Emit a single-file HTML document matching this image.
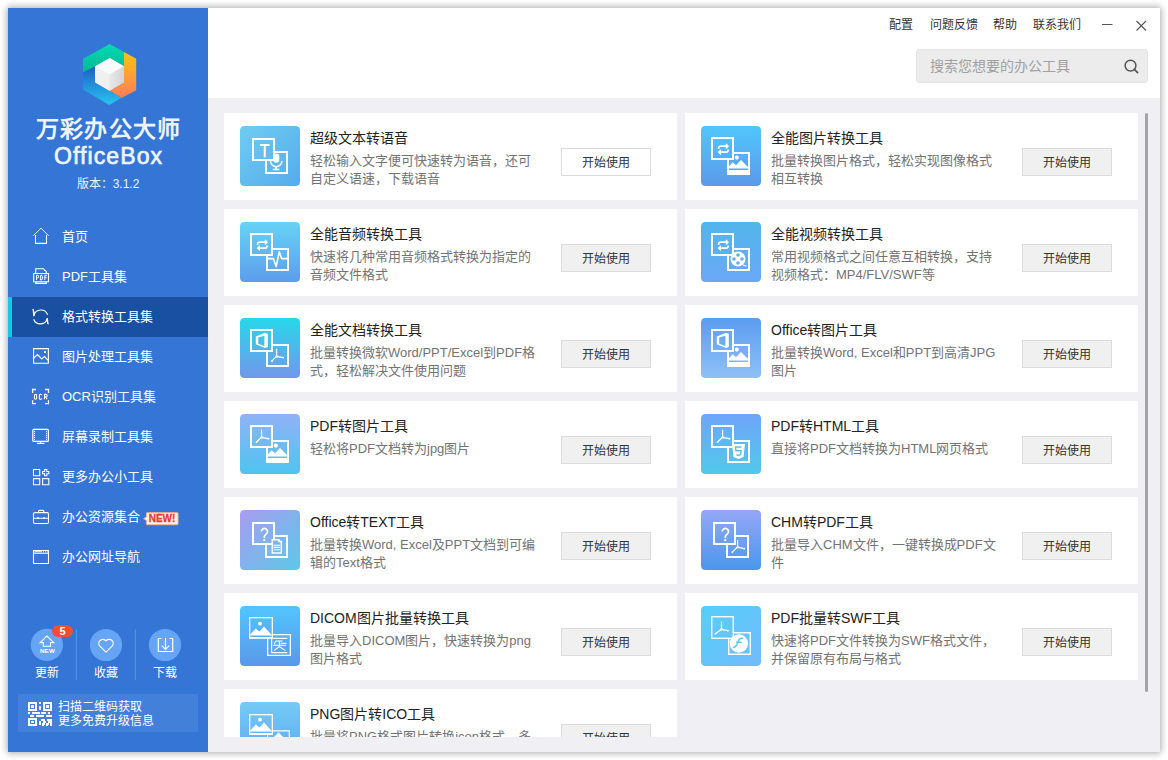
<!DOCTYPE html>
<html lang="zh-CN"><head><meta charset="utf-8">
<style>
*{margin:0;padding:0;box-sizing:border-box}
html,body{width:1168px;height:760px;overflow:hidden;background:#fff;font-family:"Liberation Sans",sans-serif}
.abs{position:absolute}
#win{position:absolute;left:8px;top:8px;width:1152px;height:744px;background:#efeff4;box-shadow:0 0 7px 1px rgba(0,0,0,.35)}
#side{position:absolute;left:8px;top:8px;width:200px;height:744px;background:#3575d6;color:#fff}
#head{position:absolute;left:208px;top:8px;width:952px;height:90px;background:#fff}
#clip{position:absolute;left:208px;top:98px;width:952px;height:639px;overflow:hidden}
#cards{position:absolute;left:-208px;top:-98px;width:1168px;height:900px}
.card{position:absolute;width:453px;height:87px;background:#fff}
.ic{position:absolute;left:16px;top:13px;width:60px;height:60px;border-radius:4px;overflow:hidden}
.ic svg{display:block}
.t{position:absolute;left:86px;top:15px;font-size:14px;line-height:20px;color:#222;white-space:nowrap}
.d{position:absolute;left:86px;top:39px;font-size:13px;line-height:18px;color:#737373;white-space:nowrap}
.btn{position:absolute;left:337px;top:35px;width:90px;height:28px;border:1px solid #dcdcdc;background:#f0f0f0;font-size:12px;line-height:28px;text-align:center;color:#333}
.btn.w{background:#fff}
.nav{position:absolute;left:0;width:200px;height:40px;font-size:14px;line-height:40px}
.nav span{position:absolute;left:54px;top:0;font-size:13px}
.nav svg{position:absolute;left:24px;top:12px}
.nav.on{background:#1a50a1}
.nav.on:before{content:"";position:absolute;left:0;top:0;width:4px;height:40px;background:#14c8e6}
.lbl{font-size:12px;line-height:16px;width:56px;text-align:center}
.menu{position:absolute;top:9px;font-size:12px;line-height:16px;color:#333}
</style></head><body>
<div id="win"></div>
<div id="side">
  <svg class="abs" style="left:0;top:0" width="200" height="200" viewBox="0 0 200 200">
    <defs>
      <linearGradient id="lg1" x1="0" y1="0" x2="0" y2="1"><stop offset="0" stop-color="#00dcb4"/><stop offset="1" stop-color="#00b890"/></linearGradient>
      <linearGradient id="lg2" x1="0" y1="0" x2="0" y2="1"><stop offset="0" stop-color="#ffc20e"/><stop offset="1" stop-color="#ff7d5a"/></linearGradient>
      <linearGradient id="lg3" x1="0" y1="0" x2="0" y2="1"><stop offset="0" stop-color="#1a5ec8"/><stop offset="1" stop-color="#2ac4f0"/></linearGradient>
      <linearGradient id="lg4" x1="0" y1="0" x2="1" y2="0"><stop offset="0" stop-color="#e8e8e8"/><stop offset="1" stop-color="#d4d4d4"/></linearGradient>
    </defs>
    <g transform="translate(-8,-8)">
    <path d="M109.8 44L123.9 52.1V65.8L109.6 58.1L95 66.5L83 72.4V58.8Z" fill="url(#lg1)"/>
    <path d="M123.9 52.1L136.2 58.8V90.3L121.7 97.8L109.5 90.7L123.9 82.3V65.8Z" fill="url(#lg2)"/>
    <path d="M83 72.4L95 66.5V82.3L109.5 90.7L121.7 97.8L109.2 105L83 89.5Z" fill="url(#lg3)"/>
    <path d="M109.6 58.1L123.9 66.3V82.3L109.5 90.7L95 82.3V66.5Z" fill="#ececec"/>
    <path d="M109.6 58.1L123.9 66.3L109.5 74.5L95 66.5Z" fill="#fbfbfb"/>
    <path d="M95 66.5L109.5 74.5V90.7L95 82.3Z" fill="#f0f0f0"/>
    <path d="M123.9 66.3V82.3L109.5 90.7V74.5Z" fill="url(#lg4)"/>
    </g>
  </svg>
  <div class="abs" style="left:0;top:107px;width:200px;text-align:center;font-size:23px;line-height:28px;font-weight:bold;color:#eef4fd;letter-spacing:1.2px;text-indent:1.2px">万彩办公大师</div>
  <div class="abs" style="left:0;top:135px;width:200px;text-align:center;font-size:23px;line-height:26px;color:#eef4fd;letter-spacing:1.1px;text-indent:1.1px;-webkit-text-stroke:0.7px #eef4fd">OfficeBox</div>
  <div class="abs" style="left:0;top:168px;width:200px;text-align:center;font-size:12px;line-height:16px;color:#eef4fd">版本：3.1.2</div>
  <div class="nav" style="top:209px"><span>首页</span></div>
  <div class="nav" style="top:249px"><span>PDF工具集</span></div>
  <div class="nav on" style="top:289px"><span>格式转换工具集</span></div>
  <div class="nav" style="top:329px"><span>图片处理工具集</span></div>
  <div class="nav" style="top:369px"><span>OCR识别工具集</span></div>
  <div class="nav" style="top:409px"><span>屏幕录制工具集</span></div>
  <div class="nav" style="top:449px"><span>更多办公小工具</span></div>
  <div class="nav" style="top:489px"><span>办公资源集合</span></div>
  <div class="nav" style="top:529px"><span>办公网址导航</span></div>
<svg class="abs" style="left:0;top:0" width="200" height="744" viewBox="8 8 200 744" fill="none" stroke="#fff" stroke-width="1.2">
 <path d="M33.3 235.7L41 228.2L48.7 235.7" stroke-width="0.9"/><path d="M35.5 235v8.4h11V235" stroke-width="1.1"/>
 <path d="M35.7 273.5V268.7h7.7l2.9 2.9v1.9M33.7 273.5h14.8v8.3H33.7zM35.7 281.8v1.6h10.6v-1.6" stroke-width="1.1"/>
 <circle cx="44.6" cy="270.5" r="0.6" fill="#fff" stroke="none"/>
 <path d="M36.5 280V275.3h0.9a1.2 1.3 0 0 1 0 2.6h-0.9M40.6 275.3h0.6a1.2 1.2 0 0 1 1.2 1.2v2.3a1.2 1.2 0 0 1-1.2 1.2h-0.6zM44.8 280V275.3h2.1M44.8 277.6h1.8" stroke-width="1"/>
 <path d="M34 315.4A7.1 7.1 0 0 1 47.6 314.8M47.3 318.4A7.1 7.1 0 0 1 33.7 319.2"/><path d="M33 309L34.4 313L33.8 316.2ZM48.1 324.2L46.8 320.2L47.4 318Z" fill="#fff" stroke-width="0.9" stroke-linejoin="round"/>
 <path d="M33.6 348.6h14.8v14.6H33.6z" stroke-width="1.1"/><path d="M33.8 358L37.5 354.6L41.7 359L44.5 356.5L48.2 360.3" stroke-width="1.1"/><rect x="44" y="351.1" width="1.9" height="1.9" fill="#fff" stroke="none"/>
 <path d="M32.6 392.9v-3.4h3.4M45.1 389.5h3.4v3.4M48.5 400.2v3.4h-3.4M36 403.6h-3.4v-3.4" stroke-width="1.3"/>
 <path d="M34.4 395.5a1.1 1.1 0 0 1 2.2 0v2.6a1.1 1.1 0 0 1-2.2 0zM41.8 395.3a1.2 1.2 0 0 0-2.4 0.3v2.4a1.2 1.2 0 0 0 2.4 0.3M44.5 399.2V394.4h1.4a1.2 1.2 0 0 1 0 2.5h-1.4M45.8 396.9L47 399.2" stroke-width="1.1"/>
 <rect x="32.8" y="429.4" width="15.6" height="12" rx="1"/><path d="M40.6 441.4v1.8M37 443.3h7.4"/>
 <circle cx="34.5" cy="431.5" r="0.65" fill="#fff" stroke="none"/><circle cx="34.5" cy="433.5" r="0.65" fill="#fff" stroke="none"/><circle cx="34.5" cy="435.5" r="0.65" fill="#fff" stroke="none"/><circle cx="34.5" cy="437.5" r="0.65" fill="#fff" stroke="none"/><circle cx="34.5" cy="439.5" r="0.65" fill="#fff" stroke="none"/><circle cx="46.5" cy="431.5" r="0.65" fill="#fff" stroke="none"/><circle cx="46.5" cy="433.5" r="0.65" fill="#fff" stroke="none"/><circle cx="46.5" cy="435.5" r="0.65" fill="#fff" stroke="none"/><circle cx="46.5" cy="437.5" r="0.65" fill="#fff" stroke="none"/><circle cx="46.5" cy="439.5" r="0.65" fill="#fff" stroke="none"/>
 <path d="M33.5 469.5h6.2v6.2h-6.2zM33.5 478.6h6.2v6.2h-6.2zM42.6 478.6h6.2v6.2h-6.2zM44.6 469.5H46.8V471.5H48.8V473.7H46.8V475.7H44.6V473.7H42.6V471.5H44.6Z" stroke-width="1.1"/>
 <rect x="33.5" y="512.6" width="15" height="10.9" rx="1.2" stroke-width="1.1"/><path d="M38.6 512.6V511.2a0.8 0.8 0 0 1 0.8-0.8h3.6a0.8 0.8 0 0 1 0.8 0.8V512.6M33.5 518.3H48.5" stroke-width="1.1"/><circle cx="38.1" cy="518" r="0.9" fill="#fff" stroke="none"/><circle cx="44.1" cy="518" r="0.9" fill="#fff" stroke="none"/>
 <path d="M33.5 550.5h15v13H33.5zM33.5 553.2h15" stroke-width="1.1"/><path d="M34.9 551.8H41.6" stroke-width="1.1" stroke-linecap="round"/><circle cx="43.5" cy="551.8" r="0.6" fill="#fff" stroke="none"/><circle cx="45.5" cy="551.8" r="0.6" fill="#fff" stroke="none"/><circle cx="47.5" cy="551.8" r="0.6" fill="#fff" stroke="none"/>
</svg>
<svg class="abs" style="left:135px;top:504px" width="38" height="14" viewBox="143 512 38 14">
 <path d="M147.2 512.7h30a0.8 0.8 0 0 1 .8.8v10.4a0.8 0.8 0 0 1-.8.8h-30a0.8 0.8 0 0 1-.8-.8v-3.6l-2.8-1.6l2.8-1.6v-3.6a0.8 0.8 0 0 1 .8-.8z" fill="#fff3e6" stroke="#f3b48c" stroke-width="1"/>
 <text x="148.8" y="522" fill="#e23b35" stroke="#e23b35" stroke-width="0.3" font-family="Liberation Sans" font-weight="bold" font-size="11" textLength="26.4" lengthAdjust="spacingAndGlyphs">NEW!</text>
</svg>
<svg class="abs" style="left:0;top:0" width="200" height="744" viewBox="8 8 200 744">
 <circle cx="46.9" cy="644.9" r="16.1" fill="#66a4f5"/>
 <circle cx="106" cy="645" r="16.1" fill="#66a4f5"/>
 <circle cx="165" cy="645" r="16.1" fill="#66a4f5"/>
 <path d="M76.3 629.5V680M135.3 629.5V680" stroke="#5a95e8" stroke-width="1"/>
 <rect x="52" y="624.9" width="21" height="12.2" rx="6.1" fill="#f24e2f"/>
 <text x="62.5" y="634.9" fill="#fff" font-family="Liberation Sans" font-weight="bold" font-size="11" text-anchor="middle">5</text>
 <path d="M46.9 636L40.2 642.6h3.2v3.6h7.1v-3.6h3.2Z" fill="none" stroke="#fff" stroke-width="1.1" stroke-linejoin="miter"/>
 <text x="39.9" y="652.9" fill="#fff" font-family="Liberation Sans" font-weight="bold" font-size="6.2" textLength="14.9" lengthAdjust="spacing">NEW</text>
 <path d="M106 652.2l-6.3-6.3a3.9 3.9 0 0 1 6.3-5a3.9 3.9 0 0 1 6.3 5z" fill="none" stroke="#fff" stroke-width="1.2" stroke-linejoin="round"/>
 <path d="M161.5 638.5h-3.2v13h14.4v-13h-3.2M165.5 638v11M161.8 645.6l3.7 3.7l3.7-3.7" fill="none" stroke="#fff" stroke-width="1.2"/>
</svg>
 <div class="abs lbl" style="left:11px;top:657px">更新</div>
 <div class="abs lbl" style="left:70px;top:657px">收藏</div>
 <div class="abs lbl" style="left:129px;top:657px">下载</div>
 <div class="abs" style="left:10px;top:686px;width:180px;height:38px;background:#4280da"></div>
 <svg class="abs" style="left:20px;top:694px" width="24" height="24" viewBox="0 0 24 24" fill="#fff"><path d="M0 0h9v9.05h-9zM2 2v5.050000000000001h5v-5.050000000000001z" fill-rule="evenodd"/><rect x="3" y="3" width="3" height="3.0500000000000007"/><path d="M15.1 0h9v9.05h-9zM17.1 2v5.050000000000001h5v-5.050000000000001z" fill-rule="evenodd"/><rect x="18.1" y="3" width="3" height="3.0500000000000007"/><path d="M0 16h9v8h-9zM2 18v4h5v-4z" fill-rule="evenodd"/><rect x="3" y="19" width="3" height="2"/><rect x="11.1" y="0" width="1.8" height="2"/><rect x="11.1" y="4.1" width="1.8" height="3.9"/><rect x="0" y="10" width="2" height="2"/><rect x="4.1" y="10" width="7.9" height="2"/><rect x="13.1" y="10" width="4.8" height="2"/><rect x="19.9" y="10" width="2.1" height="2"/><rect x="2" y="12.9" width="3.9" height="2.1"/><rect x="8" y="12.9" width="8" height="2.1"/><rect x="18.1" y="12.9" width="6.1" height="2.1"/><rect x="13" y="17" width="4" height="2"/><rect x="19" y="17" width="5" height="2"/><rect x="11" y="19" width="2" height="2"/><rect x="15" y="19" width="3" height="2"/><rect x="20" y="19" width="4" height="2"/><rect x="11" y="21" width="2" height="2"/><rect x="14" y="21" width="3" height="2"/><rect x="18" y="21" width="3" height="2"/><rect x="22" y="21" width="2" height="2"/><rect x="14" y="23" width="2" height="1"/><rect x="18" y="23" width="2" height="1"/><rect x="22" y="23" width="2" height="1"/></svg>
 <div class="abs" style="left:50px;top:692px;font-size:12px;line-height:14px;width:140px">扫描二维码获取<br>更多免费升级信息</div>
</div>
<div id="head">
  <div class="menu" style="left:681px">配置</div>
  <div class="menu" style="left:722px">问题反馈</div>
  <div class="menu" style="left:785px">帮助</div>
  <div class="menu" style="left:825px">联系我们</div>
  <svg class="abs" style="left:894px;top:10px" width="12" height="12"><path d="M0 6.5h10.5" stroke="#555" stroke-width="1"/></svg>
  <svg class="abs" style="left:928px;top:12px" width="12" height="12"><path d="M0.5 1L10 10.5M10 1L0.5 10.5" stroke="#555" stroke-width="1.1"/></svg>
  <div class="abs" style="left:708px;top:41px;width:232px;height:34px;background:#ececec;border:1px solid #e4e4e4;border-radius:3px"></div>
  <div class="abs" style="left:722px;top:49px;font-size:14px;line-height:18px;color:#a0a0a0">搜索您想要的办公工具</div>
  <svg class="abs" style="left:914px;top:49px" width="18" height="18"><circle cx="8.5" cy="8.6" r="5.4" fill="none" stroke="#555" stroke-width="1.5"/><path d="M12.3 12.4L15.6 15.7" stroke="#555" stroke-width="1.7" stroke-linecap="round"/></svg>
</div>
<div id="clip"><div id="cards">
<div class="card" style="left:224px;top:113px"><div class="ic"><svg width="60" height="60" viewBox="0 0 60 60"><defs><linearGradient id="ig1" gradientUnits="userSpaceOnUse" x1="0" y1="0" x2="60" y2="60"><stop offset="0" stop-color="#6fcdf1"/><stop offset="1" stop-color="#55abeb"/></linearGradient></defs><rect width="60" height="60" rx="4" fill="url(#ig1)"/><path d="M35 26.0H47.0V47.0H26.0V35" fill="none" stroke="#fff" stroke-width="2"/><rect x="13.0" y="13.0" width="21" height="21" fill="none" stroke="#fff" stroke-width="2"/><path d="M20 19h9.5M24.75 19v12.2" stroke="#fff" stroke-width="2" fill="none"/><g fill="none" stroke="#fff" stroke-width="1.5"><path d="M30.5 35a5.7 5.7 0 0 0 11.4 0"/><path d="M36.2 40.7v2.7M32.8 43.6h6.6"/></g><rect x="33.3" y="27.4" width="6" height="9.4" rx="3" fill="#fff"/></svg></div><div class="t">超级文本转语音</div><div class="d">轻松输入文字便可快速转为语音，还可<br>自定义语速，下载语音</div><div class="btn w">开始使用</div></div>
<div class="card" style="left:685px;top:113px"><div class="ic"><svg width="60" height="60" viewBox="0 0 60 60"><defs><linearGradient id="ig2" gradientUnits="userSpaceOnUse" x1="0" y1="0" x2="0" y2="60"><stop offset="0" stop-color="#52c6fc"/><stop offset="1" stop-color="#5b9aea"/></linearGradient></defs><rect width="60" height="60" rx="4" fill="url(#ig2)"/><path d="M33 27.0H48.0V48.0H27.0V34" fill="none" stroke="#fff" stroke-width="2"/><rect x="11.0" y="12.0" width="21" height="21" fill="none" stroke="#fff" stroke-width="2"/><g stroke="#fff" stroke-width="1.8" fill="none"><path d="M17.6 23v-0.6a2.2 2.2 0 0 1 2.2-2.2h6.5"/><path d="M25.2 17.9l2.4 2.3l-2.4 2.3z" fill="#fff" stroke-width="1" stroke-linejoin="round"/><path d="M27.1 23.4v0.6a2.2 2.2 0 0 1-2.2 2.2h-6.5"/><path d="M19.5 23.9l-2.4 2.3l2.4 2.3z" fill="#fff" stroke-width="1" stroke-linejoin="round"/></g><circle cx="35.8" cy="31.6" r="2.1" fill="#fff"/><path d="M27.8 40.6L31.6 36.2L35 39.2L40 34.1L47.2 41.2V42.6H27.8Z" fill="#fff"/><rect x="27.8" y="44" width="19.4" height="3.2" fill="#fff"/></svg></div><div class="t">全能图片转换工具</div><div class="d">批量转换图片格式，轻松实现图像格式<br>相互转换</div><div class="btn">开始使用</div></div>
<div class="card" style="left:224px;top:209px"><div class="ic"><svg width="60" height="60" viewBox="0 0 60 60"><defs><linearGradient id="ig3" gradientUnits="userSpaceOnUse" x1="0" y1="0" x2="0" y2="60"><stop offset="0" stop-color="#67d3f6"/><stop offset="1" stop-color="#5c9deb"/></linearGradient></defs><rect width="60" height="60" rx="4" fill="url(#ig3)"/><path d="M33 27.0H48.0V48.0H27.0V34" fill="none" stroke="#fff" stroke-width="2"/><rect x="11.0" y="12.0" width="21" height="21" fill="none" stroke="#fff" stroke-width="2"/><g stroke="#fff" stroke-width="1.8" fill="none"><path d="M17.6 23v-0.6a2.2 2.2 0 0 1 2.2-2.2h6.5"/><path d="M25.2 17.9l2.4 2.3l-2.4 2.3z" fill="#fff" stroke-width="1" stroke-linejoin="round"/><path d="M27.1 23.4v0.6a2.2 2.2 0 0 1-2.2 2.2h-6.5"/><path d="M19.5 23.9l-2.4 2.3l2.4 2.3z" fill="#fff" stroke-width="1" stroke-linejoin="round"/></g><path d="M27 36.6H33.3L36.2 44.6L39.2 29.9L41.7 36.6H48" fill="none" stroke="#fff" stroke-width="1.6" stroke-linejoin="round"/></svg></div><div class="t">全能音频转换工具</div><div class="d">快速将几种常用音频格式转换为指定的<br>音频文件格式</div><div class="btn">开始使用</div></div>
<div class="card" style="left:685px;top:209px"><div class="ic"><svg width="60" height="60" viewBox="0 0 60 60"><defs><linearGradient id="ig4" gradientUnits="userSpaceOnUse" x1="0" y1="0" x2="0" y2="60"><stop offset="0" stop-color="#52b6eb"/><stop offset="1" stop-color="#6aa8f6"/></linearGradient></defs><rect width="60" height="60" rx="4" fill="url(#ig4)"/><path d="M33 27.0H48.0V48.0H27.0V34" fill="none" stroke="#fff" stroke-width="2"/><rect x="11.0" y="12.0" width="21" height="21" fill="none" stroke="#fff" stroke-width="2"/><g stroke="#fff" stroke-width="1.8" fill="none"><path d="M17.6 23v-0.6a2.2 2.2 0 0 1 2.2-2.2h6.5"/><path d="M25.2 17.9l2.4 2.3l-2.4 2.3z" fill="#fff" stroke-width="1" stroke-linejoin="round"/><path d="M27.1 23.4v0.6a2.2 2.2 0 0 1-2.2 2.2h-6.5"/><path d="M19.5 23.9l-2.4 2.3l2.4 2.3z" fill="#fff" stroke-width="1" stroke-linejoin="round"/></g><circle cx="37" cy="37" r="7.5" fill="#fff"/><circle cx="37" cy="33" r="1.8" fill="url(#ig4)"/><circle cx="37" cy="41" r="1.8" fill="url(#ig4)"/><circle cx="33" cy="37" r="1.8" fill="url(#ig4)"/><circle cx="41" cy="37" r="1.8" fill="url(#ig4)"/><path d="M42 43l3.5 1" stroke="#fff" stroke-width="1.2"/></svg></div><div class="t">全能视频转换工具</div><div class="d">常用视频格式之间任意互相转换，支持<br>视频格式：MP4/FLV/SWF等</div><div class="btn">开始使用</div></div>
<div class="card" style="left:224px;top:305px"><div class="ic"><svg width="60" height="60" viewBox="0 0 60 60"><defs><linearGradient id="ig5" gradientUnits="userSpaceOnUse" x1="0" y1="0" x2="0" y2="60"><stop offset="0" stop-color="#28d8ea"/><stop offset="1" stop-color="#7297eb"/></linearGradient></defs><rect width="60" height="60" rx="4" fill="url(#ig5)"/><path d="M33 27.0H48.0V48.0H27.0V34" fill="none" stroke="#fff" stroke-width="2"/><rect x="11.0" y="12.0" width="21" height="21" fill="none" stroke="#fff" stroke-width="2"/><path d="M15.8 18.5L25 14.7L27.8 15.7V28.9L25 29.9L15.8 26.2Z" fill="#fff"/><path d="M18.2 19.6L24.4 17.8V28L18.2 25.8Z" fill="url(#ig5)"/><g fill="none" stroke="#fff" stroke-width="1.2" stroke-linecap="round"><path d="M36.6 31.2V37.5M35.9 38.9L31.6 43.4M37.4 38.699999999999996L43.4 39.6"/></g><path d="M36.6 37.0l1.2 1.9l-2.3 0.5z" fill="none" stroke="#fff" stroke-width="0.9"/><circle cx="31.8" cy="43.199999999999996" r="0.9" fill="#fff"/><circle cx="43.199999999999996" cy="39.6" r="0.9" fill="#fff"/></svg></div><div class="t">全能文档转换工具</div><div class="d">批量转换微软Word/PPT/Excel到PDF格<br>式，轻松解决文件使用问题</div><div class="btn">开始使用</div></div>
<div class="card" style="left:685px;top:305px"><div class="ic"><svg width="60" height="60" viewBox="0 0 60 60"><defs><linearGradient id="ig6" gradientUnits="userSpaceOnUse" x1="0" y1="0" x2="0" y2="60"><stop offset="0" stop-color="#5b9cf0"/><stop offset="1" stop-color="#8fc0f6"/></linearGradient></defs><rect width="60" height="60" rx="4" fill="url(#ig6)"/><path d="M33 27.0H48.0V48.0H27.0V34" fill="none" stroke="#fff" stroke-width="2"/><rect x="11.0" y="12.0" width="21" height="21" fill="none" stroke="#fff" stroke-width="2"/><path d="M15.8 18.5L25 14.7L27.8 15.7V28.9L25 29.9L15.8 26.2Z" fill="#fff"/><path d="M18.2 19.6L24.4 17.8V28L18.2 25.8Z" fill="url(#ig6)"/><circle cx="35.8" cy="31.6" r="2.1" fill="#fff"/><path d="M27.8 40.6L31.6 36.2L35 39.2L40 34.1L47.2 41.2V42.6H27.8Z" fill="#fff"/><rect x="27.8" y="44" width="19.4" height="3.2" fill="#fff"/></svg></div><div class="t">Office转图片工具</div><div class="d">批量转换Word, Excel和PPT到高清JPG<br>图片</div><div class="btn">开始使用</div></div>
<div class="card" style="left:224px;top:401px"><div class="ic"><svg width="60" height="60" viewBox="0 0 60 60"><defs><linearGradient id="ig7" gradientUnits="userSpaceOnUse" x1="0" y1="0" x2="0" y2="60"><stop offset="0" stop-color="#90b3f6"/><stop offset="1" stop-color="#4ec4ee"/></linearGradient></defs><rect width="60" height="60" rx="4" fill="url(#ig7)"/><path d="M33 27.0H48.0V48.0H27.0V34" fill="none" stroke="#fff" stroke-width="2"/><rect x="11.0" y="12.0" width="21" height="21" fill="none" stroke="#fff" stroke-width="2"/><g fill="none" stroke="#fff" stroke-width="1.2" stroke-linecap="round"><path d="M21.6 16V22.4M20.900000000000002 23.8L16.4 28.2M22.400000000000002 23.599999999999998L28.6 24.7"/></g><path d="M21.6 21.9l1.2 1.9l-2.3 0.5z" fill="none" stroke="#fff" stroke-width="0.9"/><circle cx="16.599999999999998" cy="28.0" r="0.9" fill="#fff"/><circle cx="28.400000000000002" cy="24.7" r="0.9" fill="#fff"/><circle cx="35.8" cy="31.6" r="2.1" fill="#fff"/><path d="M27.8 40.6L31.6 36.2L35 39.2L40 34.1L47.2 41.2V42.6H27.8Z" fill="#fff"/><rect x="27.8" y="44" width="19.4" height="3.2" fill="#fff"/></svg></div><div class="t">PDF转图片工具</div><div class="d">轻松将PDF文档转为jpg图片</div><div class="btn">开始使用</div></div>
<div class="card" style="left:685px;top:401px"><div class="ic"><svg width="60" height="60" viewBox="0 0 60 60"><defs><linearGradient id="ig8" gradientUnits="userSpaceOnUse" x1="0" y1="0" x2="0" y2="60"><stop offset="0" stop-color="#6fa5f8"/><stop offset="1" stop-color="#51c9ec"/></linearGradient></defs><rect width="60" height="60" rx="4" fill="url(#ig8)"/><path d="M33 27.0H48.0V48.0H27.0V34" fill="none" stroke="#fff" stroke-width="2"/><rect x="11.0" y="12.0" width="21" height="21" fill="none" stroke="#fff" stroke-width="2"/><g fill="none" stroke="#fff" stroke-width="1.2" stroke-linecap="round"><path d="M21.6 16V22.4M20.900000000000002 23.8L16.4 28.2M22.400000000000002 23.599999999999998L28.6 24.7"/></g><path d="M21.6 21.9l1.2 1.9l-2.3 0.5z" fill="none" stroke="#fff" stroke-width="0.9"/><circle cx="16.599999999999998" cy="28.0" r="0.9" fill="#fff"/><circle cx="28.400000000000002" cy="24.7" r="0.9" fill="#fff"/><path d="M31 30h13l-1.5 13l-5 2l-5-2z" fill="#fff"/><path d="M40.5 33h-6l0.4 3.8h5.2l-0.5 3.8l-2.1 0.8l-2.1-0.8" fill="none" stroke="url(#ig8)" stroke-width="1.4"/></svg></div><div class="t">PDF转HTML工具</div><div class="d">直接将PDF文档转换为HTML网页格式</div><div class="btn">开始使用</div></div>
<div class="card" style="left:224px;top:497px"><div class="ic"><svg width="60" height="60" viewBox="0 0 60 60"><defs><linearGradient id="ig9" gradientUnits="userSpaceOnUse" x1="0" y1="0" x2="60" y2="60"><stop offset="0" stop-color="#a99cf0"/><stop offset="1" stop-color="#5bc8e7"/></linearGradient></defs><rect width="60" height="60" rx="4" fill="url(#ig9)"/><path d="M35 26.0H47.0V47.0H26.0V35" fill="none" stroke="#fff" stroke-width="2"/><rect x="13.0" y="13.0" width="21" height="21" fill="none" stroke="#fff" stroke-width="2"/><path d="M21.3 21.6a3.1 3.1 0 1 1 4.9 2.5c-1.1 0.8-1.9 1.4-1.9 2.9v0.9" fill="none" stroke="#fff" stroke-width="1.7"/><circle cx="24.3" cy="30.2" r="1.15" fill="#fff"/><path d="M32.3 29.8h6.6l0.2 1.6h2.2v11.6h-9z" fill="url(#ig9)" stroke="#fff" stroke-width="1.5"/><path d="M33.6 35.2h6.4M33.6 37.4h6.4M33.6 39.8h6.4" stroke="#fff" stroke-width="1.1"/></svg></div><div class="t">Office转TEXT工具</div><div class="d">批量转换Word, Excel及PPT文档到可编<br>辑的Text格式</div><div class="btn">开始使用</div></div>
<div class="card" style="left:685px;top:497px"><div class="ic"><svg width="60" height="60" viewBox="0 0 60 60"><defs><linearGradient id="ig10" gradientUnits="userSpaceOnUse" x1="0" y1="0" x2="0" y2="60"><stop offset="0" stop-color="#95a7f8"/><stop offset="1" stop-color="#4a97ec"/></linearGradient></defs><rect width="60" height="60" rx="4" fill="url(#ig10)"/><path d="M35 26.0H47.0V47.0H26.0V35" fill="none" stroke="#fff" stroke-width="2"/><rect x="13.0" y="13.0" width="21" height="21" fill="none" stroke="#fff" stroke-width="2"/><path d="M21.3 21.6a3.1 3.1 0 1 1 4.9 2.5c-1.1 0.8-1.9 1.4-1.9 2.9v0.9" fill="none" stroke="#fff" stroke-width="1.7"/><circle cx="24.3" cy="30.2" r="1.15" fill="#fff"/><g fill="none" stroke="#fff" stroke-width="1.2" stroke-linecap="round"><path d="M36.6 30.3V36.2M35.9 37.6L31.2 42.1M37.4 37.4L43.4 38.7"/></g><path d="M36.6 35.7l1.2 1.9l-2.3 0.5z" fill="none" stroke="#fff" stroke-width="0.9"/><circle cx="31.4" cy="41.9" r="0.9" fill="#fff"/><circle cx="43.199999999999996" cy="38.7" r="0.9" fill="#fff"/></svg></div><div class="t">CHM转PDF工具</div><div class="d">批量导入CHM文件，一键转换成PDF文<br>件</div><div class="btn">开始使用</div></div>
<div class="card" style="left:224px;top:593px"><div class="ic"><svg width="60" height="60" viewBox="0 0 60 60"><defs><linearGradient id="ig11" gradientUnits="userSpaceOnUse" x1="0" y1="0" x2="0" y2="60"><stop offset="0" stop-color="#52c5fd"/><stop offset="1" stop-color="#5a98ea"/></linearGradient></defs><rect width="60" height="60" rx="4" fill="url(#ig11)"/><path d="M33 28.65H50.35V49.35H27.65V32.6" fill="none" stroke="#fff" stroke-width="1.3"/><rect x="9.65" y="11.65" width="22.7" height="20.3" fill="none" stroke="#fff" stroke-width="1.3"/><circle cx="20" cy="17.7" r="1.9" fill="#fff"/><path d="M10.2 28.4L15.8 22.4L19.4 25.5L24 20.4L32.2 29.6H10.2Z" fill="#fff"/><rect x="9" y="31" width="24" height="1.6" fill="#fff"/><path d="M47.3 32.4H31.6V46.7H47.3" fill="none" stroke="#fff" stroke-width="1.2"/><path d="M36 35H42.5M35.8 35L34.2 38M40.6 37.2H46.5M33.3 39.3H46M39.4 35V40.5L34 44.6M39.6 40.8L45.4 44.6" fill="none" stroke="#fff" stroke-width="1.1"/></svg></div><div class="t">DICOM图片批量转换工具</div><div class="d">批量导入DICOM图片，快速转换为png<br>图片格式</div><div class="btn">开始使用</div></div>
<div class="card" style="left:685px;top:593px"><div class="ic"><svg width="60" height="60" viewBox="0 0 60 60"><defs><linearGradient id="ig12" gradientUnits="userSpaceOnUse" x1="0" y1="0" x2="60" y2="60"><stop offset="0" stop-color="#55cffa"/><stop offset="1" stop-color="#72bbfa"/></linearGradient></defs><rect width="60" height="60" rx="4" fill="url(#ig12)"/><path d="M33 26.7H49.3V48.3H27.7V33" fill="none" stroke="#fff" stroke-width="1.4"/><rect x="10.7" y="10.7" width="21.6" height="21.6" fill="none" stroke="#fff" stroke-width="1.4"/><g fill="none" stroke="#fff" stroke-width="1.2" stroke-linecap="round"><path d="M20.5 16V22.4M19.8 23.8L14.3 27.8M21.3 23.599999999999998L27 24.7"/></g><path d="M20.5 21.9l1.2 1.9l-2.3 0.5z" fill="none" stroke="#fff" stroke-width="0.9"/><circle cx="14.5" cy="27.6" r="0.9" fill="#fff"/><circle cx="26.8" cy="24.7" r="0.9" fill="#fff"/><circle cx="37.9" cy="37.5" r="9.2" fill="#fff"/><path d="M41.699999999999996 32.5c-2.6-0.8-3.8 0.8-4.6 3.2c-0.9 2.6-1.6 5.4-4.6 5.8M35.5 36.3h4.6" fill="none" stroke="url(#ig12)" stroke-width="1.5" stroke-linecap="round"/></svg></div><div class="t">PDF批量转SWF工具</div><div class="d">快速将PDF文件转换为SWF格式文件，<br>并保留原有布局与格式</div><div class="btn">开始使用</div></div>
<div class="card" style="left:224px;top:689px"><div class="ic"><svg width="60" height="60" viewBox="0 0 60 60"><defs><linearGradient id="ig13" gradientUnits="userSpaceOnUse" x1="0" y1="0" x2="0" y2="60"><stop offset="0" stop-color="#75cbf6"/><stop offset="1" stop-color="#5ba6ee"/></linearGradient></defs><rect width="60" height="60" rx="4" fill="url(#ig13)"/><path d="M33 28.849999999999998H49.35V49.550000000000004H27.65V33" fill="none" stroke="#fff" stroke-width="1.3"/><rect x="9.65" y="12.65" width="22.7" height="19.7" fill="none" stroke="#fff" stroke-width="1.3"/><circle cx="20" cy="17.7" r="1.9" fill="#fff"/><path d="M10.2 28.4L15.8 22.4L19.4 25.5L24 20.4L32.2 29.6H10.2Z" fill="#fff"/><rect x="9" y="31" width="24" height="1.6" fill="#fff"/><path d="M32 37L38.5 30.2L45 37Z" fill="#fff"/></svg></div><div class="t">PNG图片转ICO工具</div><div class="d">批量将PNG格式图片转换icon格式，多<br>个图标同时转换</div><div class="btn">开始使用</div></div>
</div></div>
<div class="abs" style="left:1145px;top:113px;width:3px;height:579px;background:#a5a5a5;border-radius:1.5px"></div>
</body></html>
